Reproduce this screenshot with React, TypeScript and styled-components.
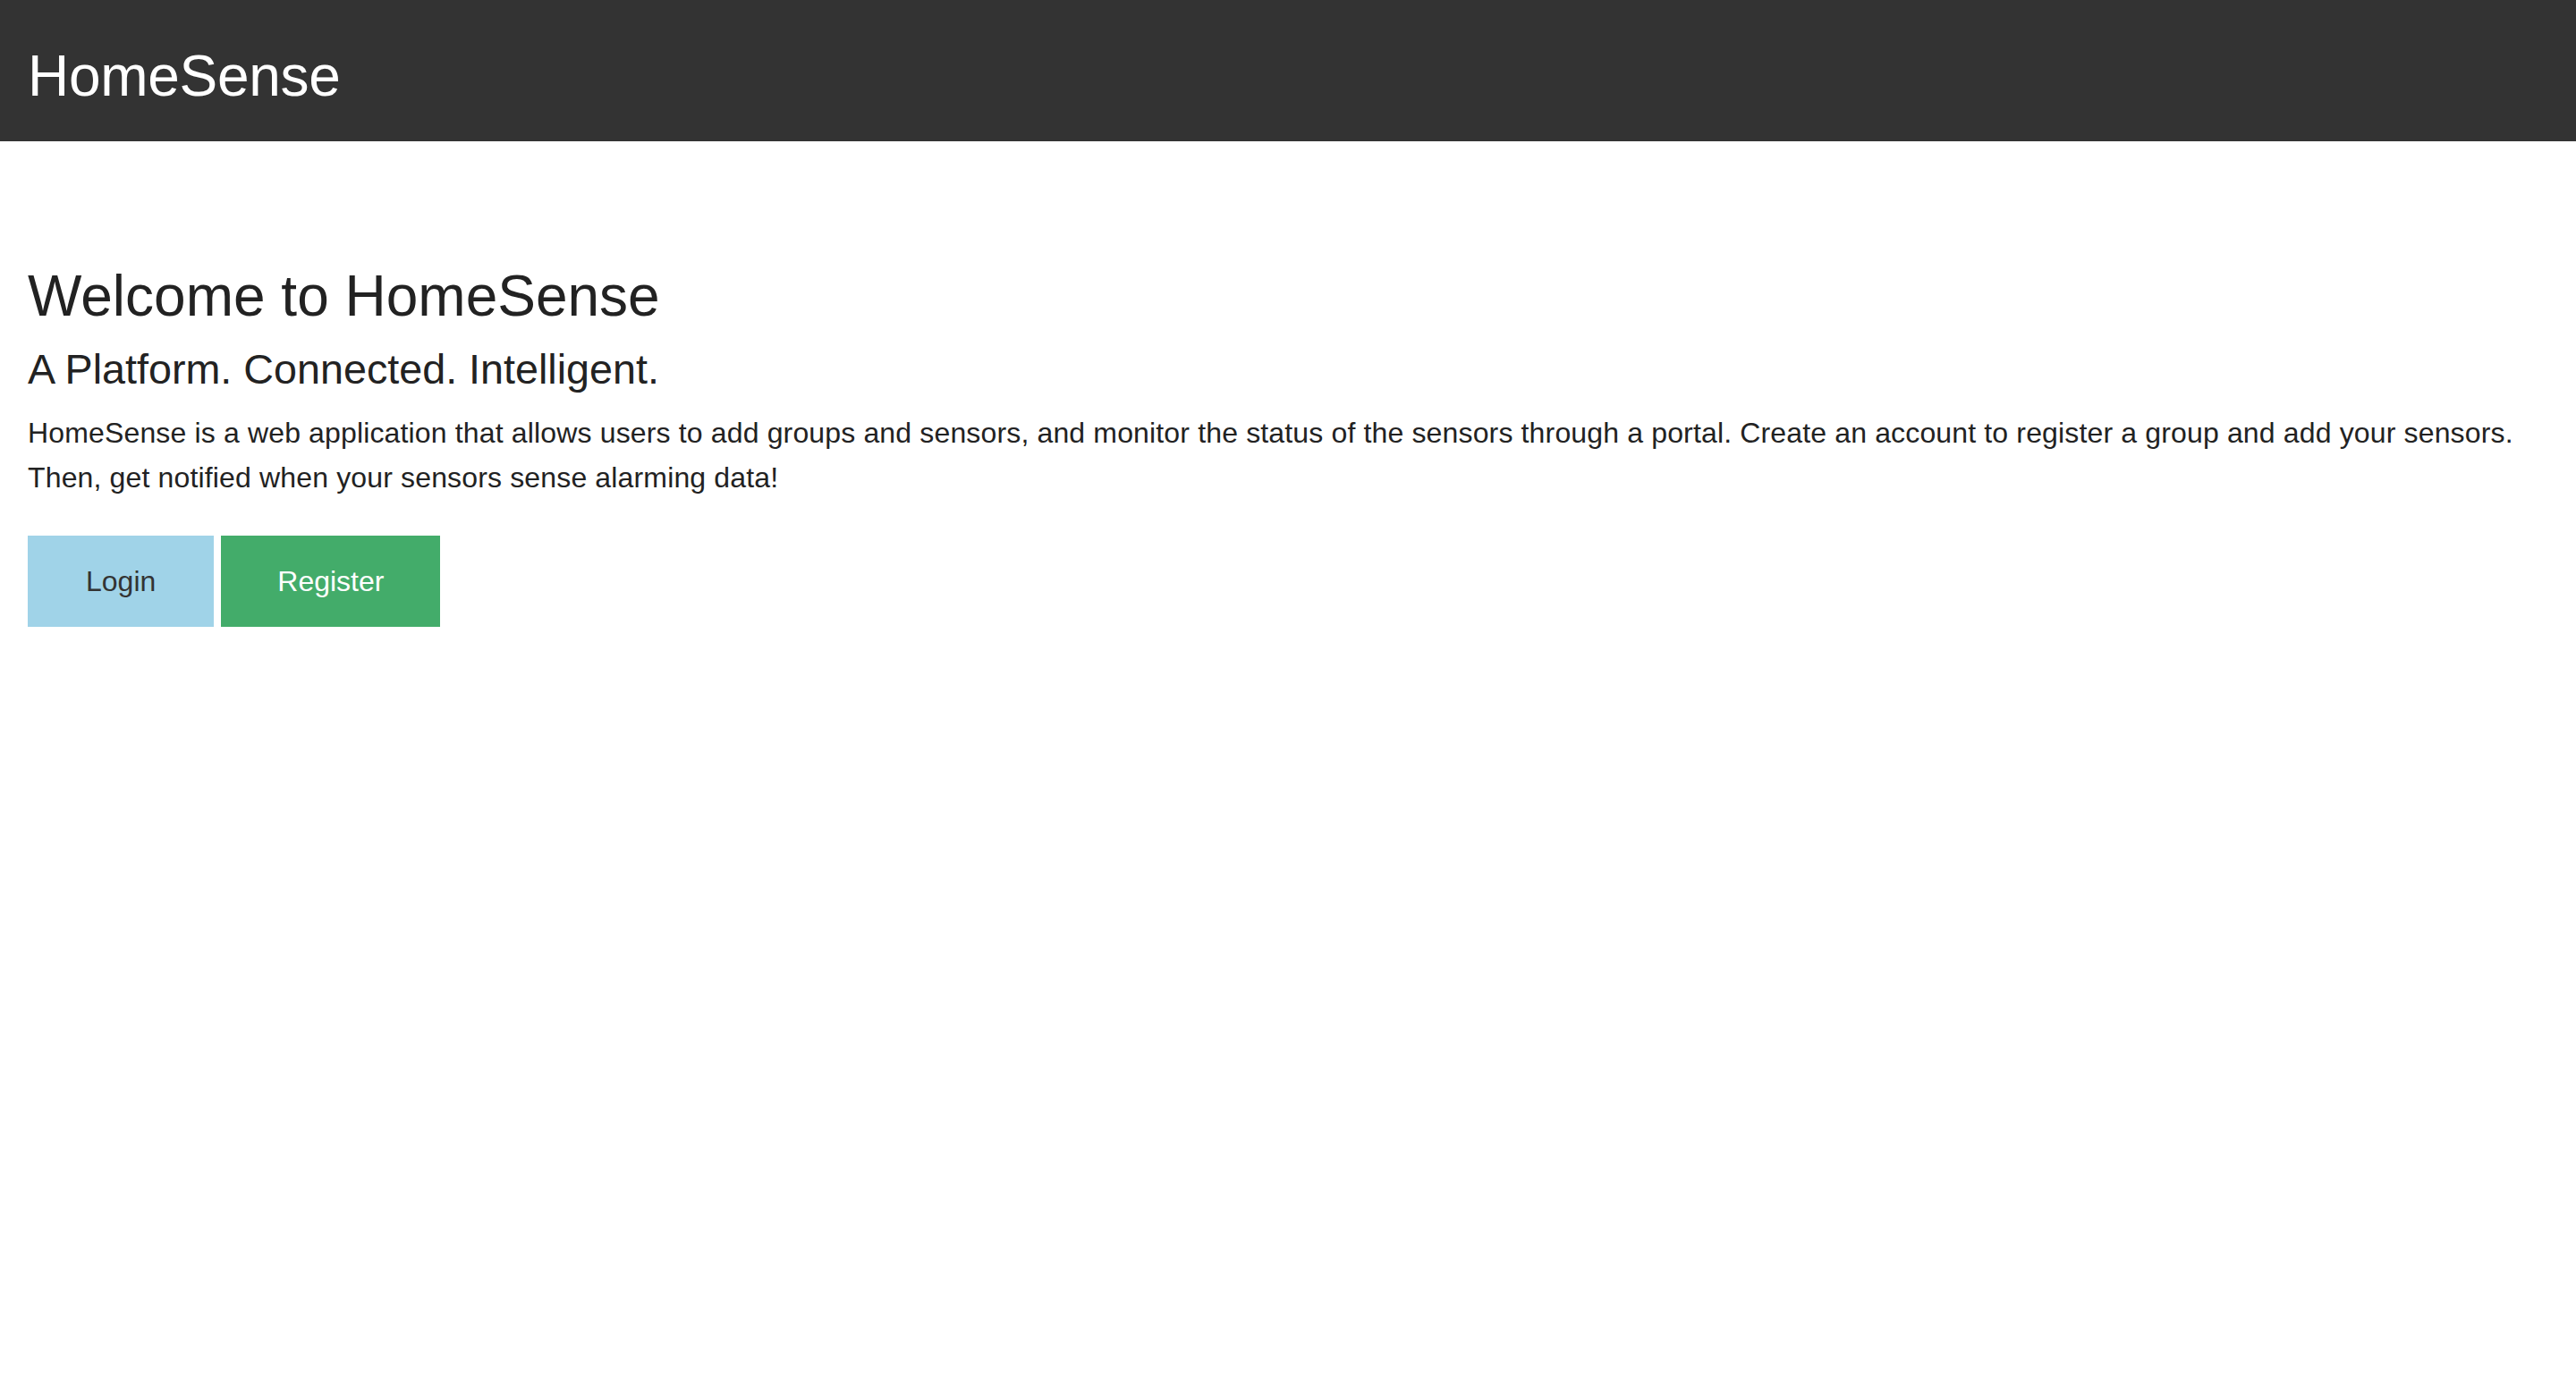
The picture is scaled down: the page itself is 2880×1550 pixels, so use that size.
import React from "react";
import styled, { createGlobalStyle } from "styled-components";

const GlobalStyle = createGlobalStyle`
  html, body {
    margin: 0;
    padding: 0;
    background: #ffffff;
  }
  body {
    font-family: "Liberation Sans", Arial, Helvetica, sans-serif;
    color: #222222;
  }
  #root {
    min-height: 100vh;
  }
`;

const TopBar = styled.header`
  height: 158px;
  box-sizing: border-box;
  padding: 12px 31px 0;
  display: flex;
  align-items: center;
  background: #333333;
`;

const Brand = styled.a`
  font-size: 64px;
  letter-spacing: -0.3px;
  color: #ffffff;
  text-decoration: none;
`;

const Main = styled.main`
  padding: 135px 20px 0 31px;
  display: flex;
  flex-direction: column;
`;

const Title = styled.h1`
  margin: 0;
  font-size: 64px;
  line-height: 76px;
  font-weight: 400;
  color: #222222;
`;

const Tagline = styled.h2`
  margin: 17px 0 0;
  font-size: 46.7px;
  line-height: 54px;
  font-weight: 400;
  color: #222222;
`;

const Intro = styled.p`
  margin: 19px 0 0;
  font-size: 32px;
  line-height: 50px;
  letter-spacing: 0.15px;
  color: #222222;
`;

const Actions = styled.div`
  margin-top: 40px;
  display: flex;
  gap: 8px;
`;

const Button = styled.a<{ $tone: "info" | "success" }>`
  height: 102px;
  padding: 0 ${(p) => (p.$tone === "info" ? "65px" : "63px")};
  display: flex;
  align-items: center;
  justify-content: center;
  font-size: 32px;
  text-decoration: none;
  cursor: pointer;
  background: ${(p) => (p.$tone === "info" ? "#a0d3e8" : "#43ac6a")};
  color: ${(p) => (p.$tone === "info" ? "#333333" : "#ffffff")};
`;

export default function App() {
  return (
    <>
      <GlobalStyle />
      <TopBar>
        <Brand href="#">HomeSense</Brand>
      </TopBar>
      <Main>
        <Title>Welcome to HomeSense</Title>
        <Tagline>A Platform. Connected. Intelligent.</Tagline>
        <Intro>
          HomeSense is a web application that allows users to add groups and
          sensors, and monitor the status of the sensors through a portal.
          Create an account to register a group and add your sensors. Then, get
          notified when your sensors sense alarming data!
        </Intro>
        <Actions>
          <Button $tone="info" href="#">
            Login
          </Button>
          <Button $tone="success" href="#">
            Register
          </Button>
        </Actions>
      </Main>
    </>
  );
}
